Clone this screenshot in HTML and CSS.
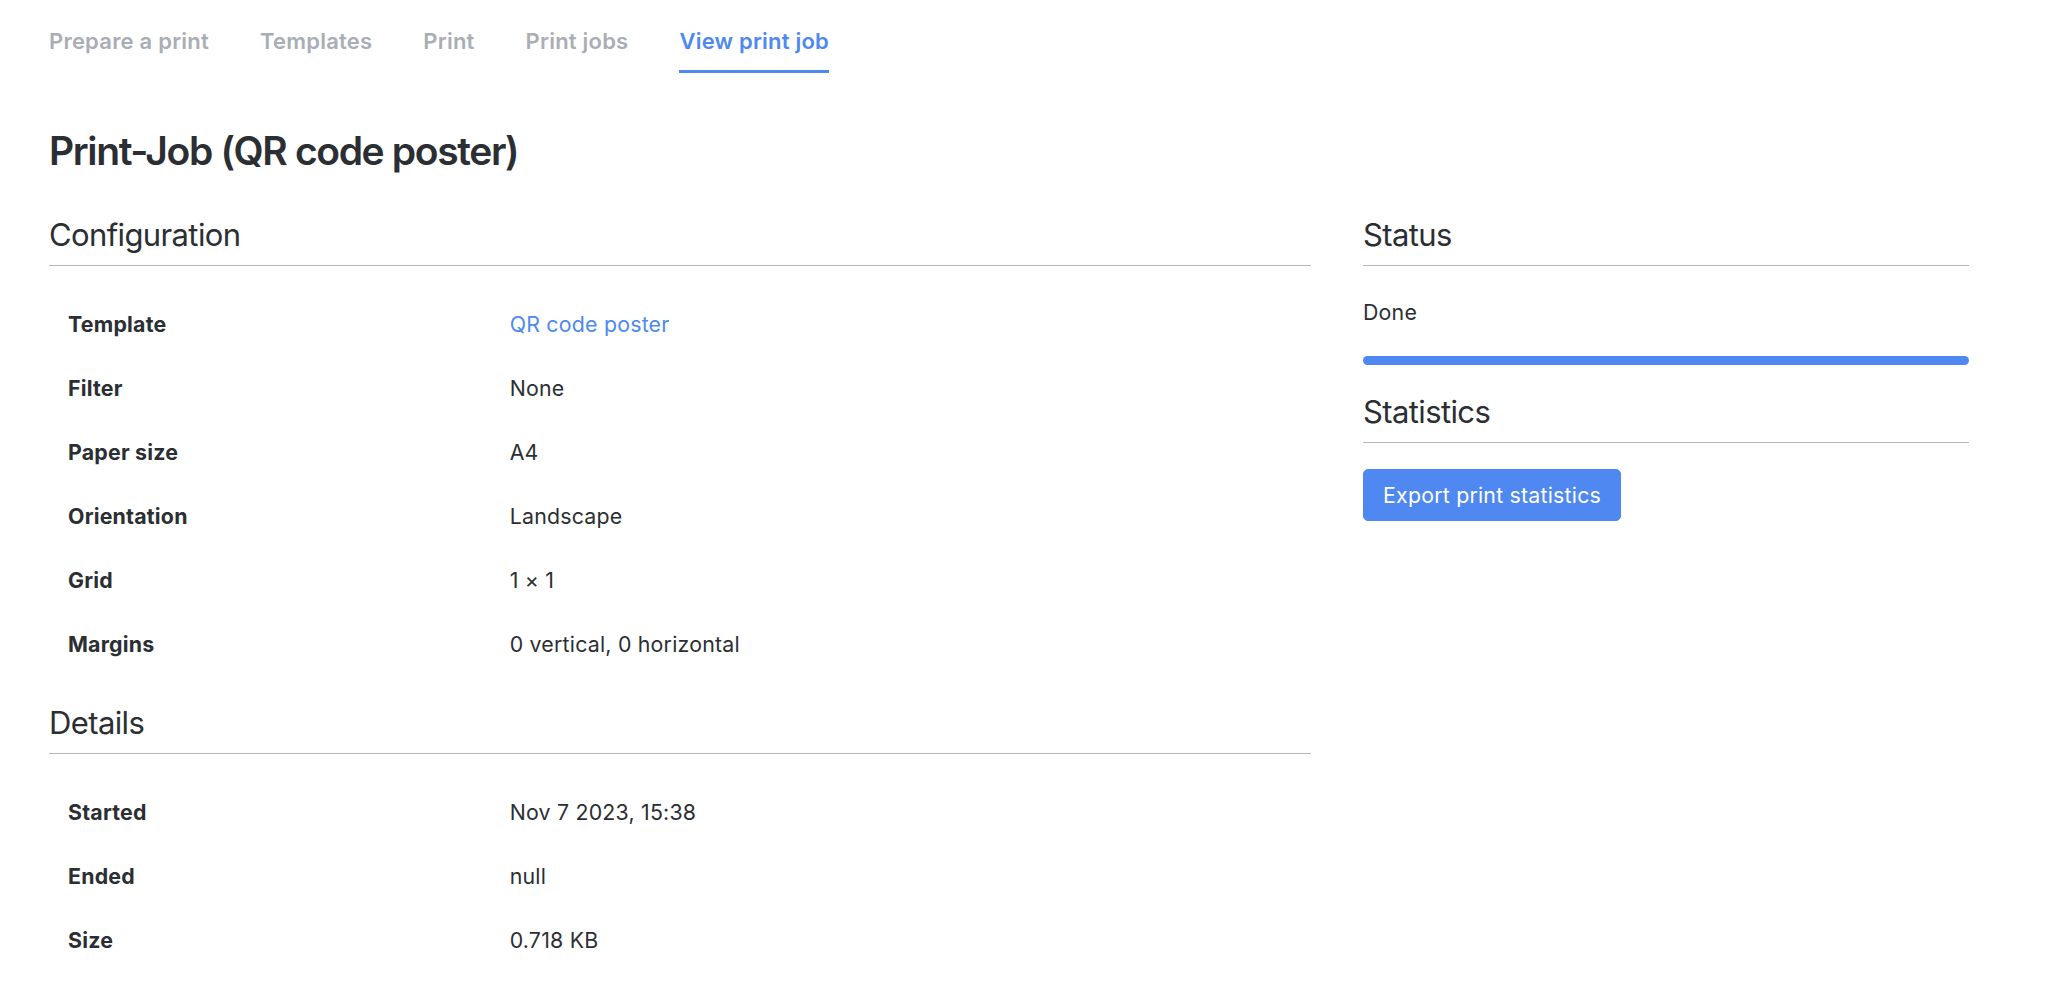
FILE: index.html
```html
<!DOCTYPE html>
<html lang="en">
<head>
    <meta charset="UTF-8">
    <meta name="viewport" content="width=device-width, initial-scale=1.0">
    <title>Print-Job (QR code poster)</title>
    <link rel="stylesheet" href="styles.css">
</head>
<body>
    <nav class="tabs">
        <a class="tab" href="#">Prepare a print</a>
        <a class="tab" href="#">Templates</a>
        <a class="tab" href="#">Print</a>
        <a class="tab" href="#">Print jobs</a>
        <a class="tab active" href="#">View print job</a>
    </nav>

    <main class="page">
        <h1 class="page-title">Print-Job (QR code poster)</h1>

        <div class="columns">
            <div class="col-main">
                <h2 class="section-title">Configuration</h2>
                <table class="info">
                    <tr><th>Template</th><td><a class="link" href="#">QR code poster</a></td></tr>
                    <tr><th>Filter</th><td>None</td></tr>
                    <tr><th>Paper size</th><td>A4</td></tr>
                    <tr><th>Orientation</th><td>Landscape</td></tr>
                    <tr><th>Grid</th><td>1 × 1</td></tr>
                    <tr><th>Margins</th><td>0 vertical, 0 horizontal</td></tr>
                </table>

                <h2 class="section-title spaced">Details</h2>
                <table class="info">
                    <tr><th>Started</th><td>Nov 7 2023, 15:38</td></tr>
                    <tr><th>Ended</th><td>null</td></tr>
                    <tr><th>Size</th><td>0.718 KB</td></tr>
                </table>
            </div>

            <aside class="col-side">
                <h2 class="section-title">Status</h2>
                <p class="status-text">Done</p>
                <div class="progress">
                    <div class="progress-bar" style="width: 100%"></div>
                </div>

                <h2 class="section-title">Statistics</h2>
                <button class="btn" type="button">Export print statistics</button>
            </aside>
        </div>
    </main>
</body>
</html>
```

FILE: styles.css
```css
* {
    box-sizing: border-box;
}

body {
    margin: 0;
    font-family: Inter, "Noto Sans", sans-serif;
    font-size: 21.33px;
    line-height: 32px;
    letter-spacing: 0.01em;
    color: #2b2f33;
    background: #fff;
}

a {
    text-decoration: none;
}

/* top tabs */
.tabs {
    display: flex;
    gap: 51px;
    padding: 25px 49px 0;
}

.tab {
    display: block;
    padding-bottom: 13px;
    border-bottom: 3px solid transparent;
    color: #a9aeb6;
    font-size: 22px;
    font-weight: 600;
    letter-spacing: 0.01em;
}

.tab.active {
    color: #4e88f0;
    border-bottom-color: #4e88f0;
}

/* page */
.page {
    width: 1920px;
    margin-left: 49px;
}

.page-title {
    margin: 54px 0 0;
    font-size: 39px;
    line-height: 47px;
    font-weight: 600;
    letter-spacing: -0.035em;
}

.columns {
    display: grid;
    grid-template-columns: 1262px 606px;
    gap: 52px;
    margin-top: 42px;
}

.section-title {
    margin: 0;
    padding-bottom: 11px;
    border-bottom: 1px solid #b4b7bc;
    font-size: 31px;
    line-height: 38px;
    font-weight: 400;
    letter-spacing: -0.02em;
}

.section-title.spaced {
    margin-top: 28px;
}

/* key / value tables */
.info {
    width: 100%;
    margin-top: 26px;
    border-collapse: collapse;
}

.info th,
.info td {
    padding: 16px 19px;
    text-align: left;
    vertical-align: top;
}

.info th {
    width: 35%;
    font-weight: 700;
}

.link {
    color: #4e88f0;
}

/* status column */
.status-text {
    margin: 30px 0 0;
}

.progress {
    height: 9px;
    margin: 28px 0 28px;
    border-radius: 5px;
    background: #e9ecef;
    overflow: hidden;
}

.progress-bar {
    height: 100%;
    background: #4e88f0;
}

.btn {
    margin-top: 26px;
    padding: 9px 19px;
    border: 1px solid #4e88f0;
    border-radius: 5px;
    background: #4e88f0;
    color: #fff;
    font-family: inherit;
    font-size: 21.33px;
    line-height: 32px;
    letter-spacing: 0.01em;
    cursor: pointer;
}
```
